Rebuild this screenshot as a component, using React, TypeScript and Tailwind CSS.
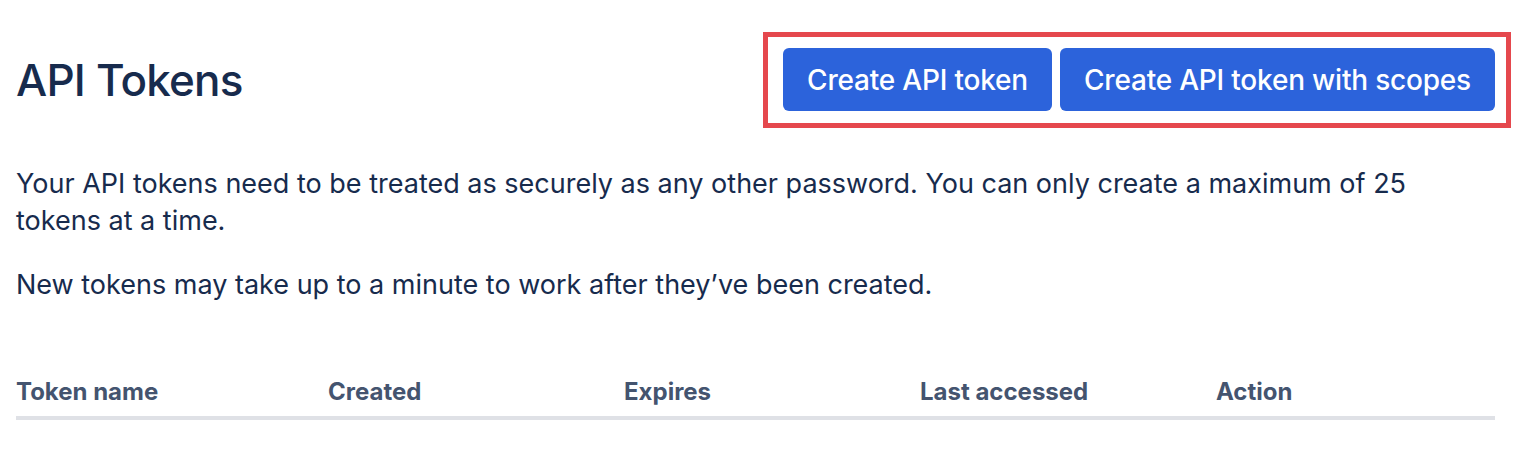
export default function App() {
  const columns = ["Token name", "Created", "Expires", "Last accessed", "Action"]

  return (
    <div className="h-[458px] w-[1520px] bg-white pl-4 pr-[25px] font-['Inter',sans-serif] text-[#172b4d]">
      {/* Header */}
      <div className="flex items-center justify-between pt-[32px]">
        <h1 className="text-[44px] font-medium tracking-[-0.8px] text-[#172b4d]">
          API Tokens
        </h1>
        <div className="-mr-4 flex gap-2 border-[5px] border-[#e5484d] pb-[12px] pl-[15px] pr-[11px] pt-[11px]">
          <button className="h-[63px] w-[269px] rounded-md bg-[#2c63db] text-[28px] font-medium tracking-[-0.2px] text-white">
            Create API token
          </button>
          <button className="h-[63px] w-[435px] rounded-md bg-[#2c63db] text-[28px] font-medium tracking-[-0.2px] text-white">
            Create API token with scopes
          </button>
        </div>
      </div>

      {/* Description */}
      <div className="mt-[37px] max-w-[1440px] text-[27px] leading-[37px]">
        <p>
          Your API tokens need to be treated as securely as any other password. You can
          only create a maximum of 25 tokens at a time.
        </p>
        <p className="mt-[27px]">
          New tokens may take up to a minute to work after they’ve been created.
        </p>
      </div>

      {/* Table header */}
      <div className="mt-[71px] grid grid-cols-[312px_296px_296px_296px_1fr] border-b-4 border-[#dfe1e6] pb-[6px] text-[24px] font-bold text-[#44546f]">
        {columns.map((c) => (
          <div key={c}>{c}</div>
        ))}
      </div>
    </div>
  )
}
